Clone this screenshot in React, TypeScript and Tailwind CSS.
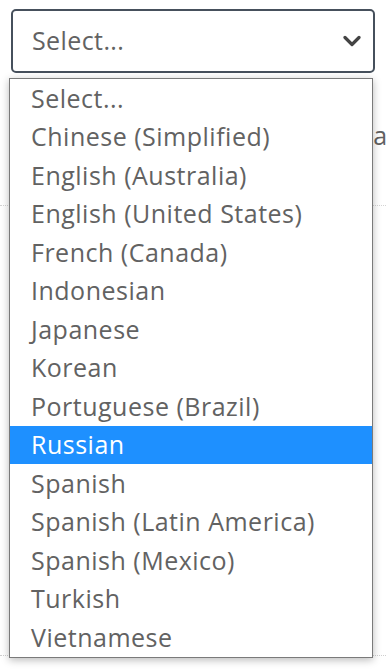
const options = [
  "Select...",
  "Chinese (Simplified)",
  "English (Australia)",
  "English (United States)",
  "French (Canada)",
  "Indonesian",
  "Japanese",
  "Korean",
  "Portuguese (Brazil)",
  "Russian",
  "Spanish",
  "Spanish (Latin America)",
  "Spanish (Mexico)",
  "Turkish",
  "Vietnamese",
];

export default function App() {
  const active = "Russian";
  return (
    <div className="relative h-[670px] w-[386px] overflow-hidden bg-white font-['Open_Sans',sans-serif] text-[#626262]">
      <div className="px-[11px] pt-[9px]">
        <div className="flex h-[64px] items-center justify-between rounded-[5px] border-2 border-[#46505c] pl-[19px] pr-[12px] text-[25px] tracking-[0.4px]">
          <span>Select...</span>
          <svg width="18" height="12" viewBox="0 0 18 12" className="text-[#444]">
            <path d="M2 2.5l7 7 7-7" fill="none" stroke="currentColor" strokeWidth="3.2" strokeLinecap="round" strokeLinejoin="round" />
          </svg>
        </div>
        <p className="mt-[44px] whitespace-nowrap pl-[325px] text-[25px] tracking-[0.4px]">Clear</p>
        <hr className="mt-[50px] -mx-[11px] border-t border-dotted border-[#d4d4d4]" />
      </div>
      <hr className="absolute left-0 right-0 top-[655px] border-t border-dotted border-[#cfcfcf]" />

      <ul className="absolute left-[9px] top-[78px] w-[364px] border border-[#7a7a7a] bg-white shadow-[0_2px_8px_rgba(0,0,0,0.28)]">
        {options.map((o) => (
          <li
            key={o}
            className={
              "flex h-[38.5px] items-center pl-[21px] text-[25px] leading-none tracking-[0.5px] " +
              (o === active ? "bg-[#1e90ff] text-white" : "")
            }
          >
            {o}
          </li>
        ))}
      </ul>
    </div>
  );
}
